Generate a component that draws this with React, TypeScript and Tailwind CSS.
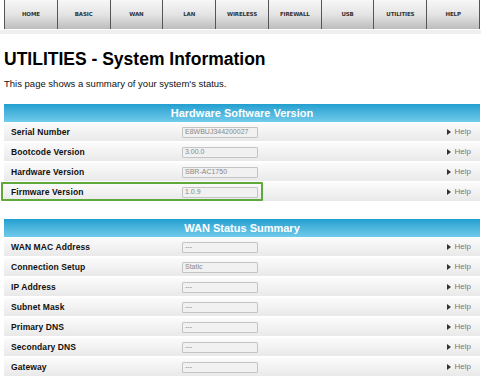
import React from "react";

const tabs = ["HOME", "BASIC", "WAN", "LAN", "WIRELESS", "FIREWALL", "USB", "UTILITIES", "HELP"];

type Row = { label: string; value: string; highlight?: boolean };

const hardware: Row[] = [
  { label: "Serial Number", value: "E8WBUJ344200027" },
  { label: "Bootcode Version", value: "3.00.0" },
  { label: "Hardware Version", value: "SBR-AC1750" },
  { label: "Firmware Version", value: "1.0.9", highlight: true },
];

const wan: Row[] = [
  { label: "WAN MAC Address", value: "---" },
  { label: "Connection Setup", value: "Static" },
  { label: "IP Address", value: "---" },
  { label: "Subnet Mask", value: "---" },
  { label: "Primary DNS", value: "---" },
  { label: "Secondary DNS", value: "---" },
  { label: "Gateway", value: "---" },
];

function Section({ title, rows }: { title: string; rows: Row[] }) {
  return (
    <div className="flex flex-col">
      <div className="h-[18px] flex items-center justify-center bg-gradient-to-b from-[#1e9fd0] to-[#6fcbea] text-white font-bold text-[11px] font-['Liberation_Sans',Arial,sans-serif]">
        {title}
      </div>
      <div className="flex flex-col gap-[2px] mt-[1px]">
        {rows.map((r) => (
          <div
            key={r.label}
            className={
              "h-[18px] flex items-center bg-gradient-to-b from-[#fbfbfb] to-[#e9e9e9] " +
              (r.highlight ? "relative" : "")
            }
          >
            <div className="w-[178px] pl-[7px] text-[8.5px] font-bold text-[#111] tracking-[0.1px] font-['Liberation_Sans',Arial,sans-serif]">
              {r.label}
            </div>
            <div className="w-[76px] h-[11px] border border-[#c4c4c4] rounded-[1px] bg-[#f1f1f1] flex items-center pl-[2px] text-[7px] text-[#888] font-['Liberation_Sans',Arial,sans-serif]">
              {r.value}
            </div>
            <div className="ml-auto mr-[9px] flex items-center gap-[4px] text-[8px] text-[#777] font-['Liberation_Sans',Arial,sans-serif]">
              <span className="w-0 h-0 border-y-[3px] border-y-transparent border-l-[4px] border-l-[#333]" />
              Help
            </div>
            {r.highlight && (
              <div className="absolute left-[-3px] top-[-1px] w-[262px] h-[19px] border-2 border-[#5fa83a] rounded-[1px]" />
            )}
          </div>
        ))}
      </div>
    </div>
  );
}

export default function App() {
  return (
    <div className="w-[481px] h-[389px] bg-white overflow-hidden font-['Liberation_Sans',Arial,sans-serif]">
      <div className="flex pl-[4px] pr-[1px] h-[29px]">
        {tabs.map((t) => (
          <div
            key={t}
            className="flex-1 flex items-center justify-center bg-gradient-to-b from-[#f7f7f7] via-[#e4e4e4] to-[#bdbdbd] border-r border-[#555] first:border-l text-[5.5px] font-bold text-[#333] tracking-tight font-['DejaVu_Sans',Verdana,sans-serif]"
          >
            {t}
          </div>
        ))}
      </div>
      <div className="h-[4px] bg-[#efefef] mt-[1px]" />
      <h1 className="mt-[15px] ml-[4px] text-[17.5px] leading-[20px] font-bold text-black">
        UTILITIES - System Information
      </h1>
      <p className="mt-[9px] ml-[4px] text-[9.5px] leading-[12px] text-[#111]">
        This page shows a summary of your system's status.
      </p>
      <div className="mt-[14px] ml-[4px] mr-[1px] flex flex-col gap-[18px]">
        <Section title="Hardware Software Version" rows={hardware} />
        <Section title="WAN Status Summary" rows={wan} />
      </div>
    </div>
  );
}
